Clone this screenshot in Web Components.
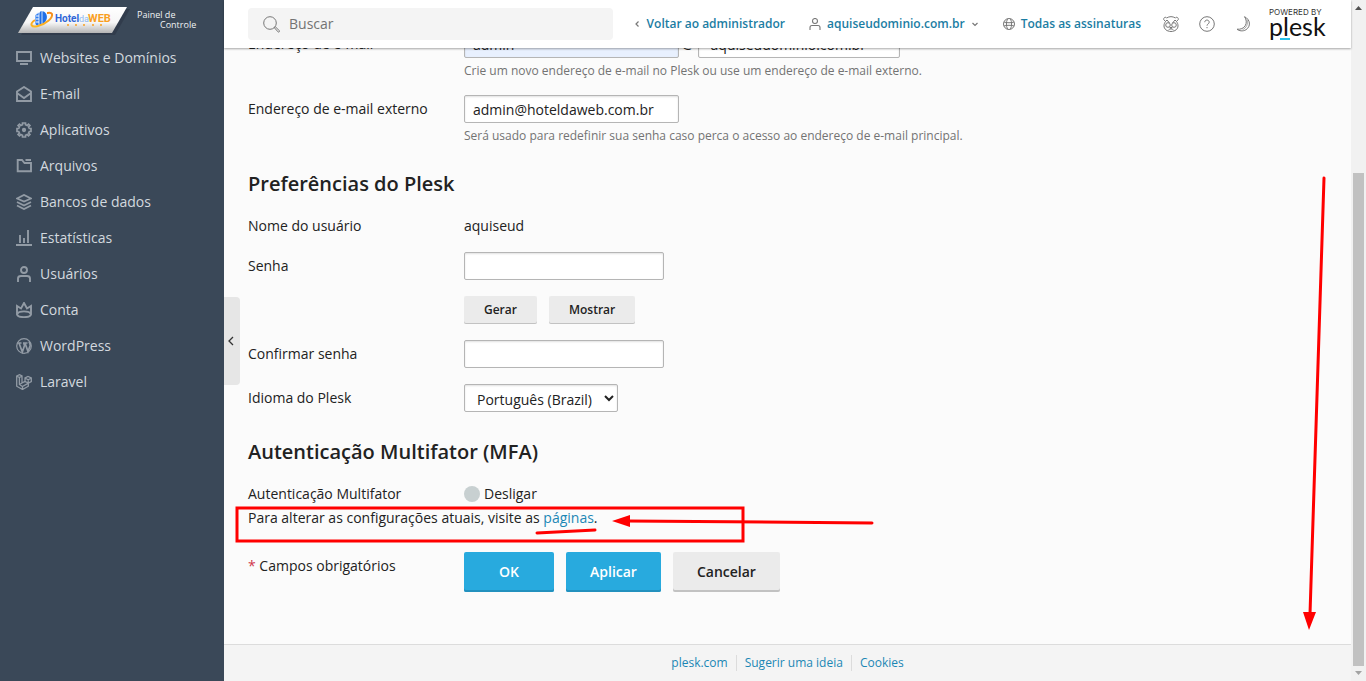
<!DOCTYPE html>
<html lang="pt-BR">
<head>
<meta charset="utf-8">
<meta name="viewport" content="width=device-width, initial-scale=1">
<title>Plesk – Meu perfil</title>
<style>
html, body { margin: 0; height: 100%; }
body { font: 14px/20px "Open Sans", "Noto Sans", sans-serif; color: #222; background: #fbfbfb; overflow: hidden; }
</style>
</head>
<body>
<plesk-app></plesk-app>

<template id="t-app">
<style>
:host { display: grid; grid-template-columns: 224px minmax(0, 1fr) 15px; height: 100vh; overflow: hidden; position: relative; }
.page { display: flex; flex-direction: column; min-width: 0; position: relative; }
main { flex: 1; padding: 0 24px; }
.collapse { position: absolute; left: 0; top: 297px; width: 16px; height: 88px; padding: 0 2px 0 0; border: 0; border-radius: 0 4px 4px 0; background: #e6e6e6; display: grid; place-items: center; }
svg.notes { position: absolute; inset: 0; width: 100%; height: 100%; pointer-events: none; z-index: 5; }
</style>
<side-bar></side-bar>
<div class="page">
  <top-bar></top-bar>
  <main><profile-form></profile-form></main>
  <page-footer></page-footer>
  <button class="collapse" aria-label="Recolher menu"><svg width="8" height="10" fill="none" stroke="#333" stroke-width="1.3"><path d="M6 1 2 5l4 4"/></svg></button>
</div>
<scroll-rail></scroll-rail>
<svg class="notes" fill="none" stroke="#f00" stroke-width="3" stroke-linecap="round" aria-hidden="true">
  <rect x="237" y="508" width="506" height="33"/>
  <path d="M537 533 595 530M872 523 628 521M1324 178 1310 614"/>
  <path d="M612 521 630 515V527ZM1309 630 1303 612H1316Z" fill="#f00" stroke="none"/>
</svg>
</template>

<template id="t-side">
<style>
:host { display: block; background: #3a4858; color: #d3d9df; }
.brand { height: 40px; display: flex; }
.brand a { display: block; }
nav { display: flex; flex-direction: column; }
svg { display: block; }
</style>
<div class="brand"><a href="#" aria-label="Painel de Controle">
<svg width="224" height="40">
  <defs><linearGradient id="g" x2="0" y2="1"><stop stop-color="#fff"/><stop offset=".6" stop-color="#f6f6f6"/><stop offset="1" stop-color="#b5b5b5"/></linearGradient>
  <linearGradient id="o" x2="0" y2="1"><stop stop-color="#f58a1c"/><stop offset="1" stop-color="#fdb924"/></linearGradient></defs>
  <path d="M21 35 37 9H130L115 35Z" fill="#2b3644" opacity=".6"/>
  <path d="M18 33 33 7H127L112 33Z" fill="url(#g)"/>
  <path d="M41 11c8 0 8 12-1 14h-4l1-9 2-3Z" fill="#1f6fe8"/>
  <path d="M35 24V15l4-3v13M42 11v14" fill="#2f7df0" stroke="#fff" stroke-width=".8"/>
  <path d="M36 16h3M36 19h3M36 22h3" stroke="#fff" stroke-width="1"/>
  <path d="M35 20c-6 4-4 8 3 6 8-2 15-8 14-12-1-2-4-1-5-1" fill="none" stroke="url(#o)" stroke-width="2"/>
  <g font-family="Roboto, sans-serif" font-size="10">
    <text x="55" y="22" font-weight="700" fill="#2f66d8">Hotel</text>
    <text x="79" y="22" font-size="9" fill="#8fb8f0">da</text>
    <text x="88" y="22" font-size="11" font-weight="700" fill="#f9a01f">WEB</text>
  </g>
  <path d="M67 25h2M75 25h2M83 25h2M92 25h2M100 25h2" stroke="#f9a01f" stroke-width="1.500"/>
  <g font-family="Open Sans, sans-serif" font-size="9" fill="#f0f2f4"><text x="137" y="18">Painel de</text><text x="160" y="28">Controle</text></g>
</svg></a></div>
<nav>
<nav-item><svg slot="icon" viewBox="0 0 16 16"><path d="M1 2h14v9H1ZM4 14h8"/></svg>Websites e Domínios</nav-item>
<nav-item><svg slot="icon" viewBox="0 0 16 16"><path d="M1 5.500 8 1l7 4.500V15H1ZM1 7l7 5 7-5"/></svg>E-mail</nav-item>
<nav-item><svg slot="icon" viewBox="0 0 16 16"><path d="M6.500 1h3v1.700l1.700.7L12.500 2.200l1.400 1.400-1.300 1.300.7 1.600H15v3h-1.700l-.7 1.600 1.300 1.300-1.400 1.400-1.300-1.200-1.700.7V15h-3v-1.700l-1.700-.7-1.300 1.200-1.400-1.400 1.300-1.300-.7-1.600H1v-3h1.700l.7-1.600-1.300-1.300 1.400-1.400 1.300 1.200 1.700-.7Z" stroke-width="1.700"/><circle cx="8" cy="8" r="1.200" fill="#929ba5"/></svg>Aplicativos</nav-item>
<nav-item><svg slot="icon" viewBox="0 0 16 16"><path d="M1.700 2H6l2.500 3H15v8.300H1.700ZM9.500 2H15"/></svg>Arquivos</nav-item>
<nav-item><svg slot="icon" viewBox="0 0 16 16"><path d="M1 4.500 8 1l7 3.500L8 7.500ZM1 8l7 3.500L15 8M1 11.500 8 15l7-3.500"/></svg>Bancos de dados</nav-item>
<nav-item><svg slot="icon" viewBox="0 0 16 16"><path d="M0 15h16M4 5v8M8 8v5M12 0v13"/></svg>Estatísticas</nav-item>
<nav-item><svg slot="icon" viewBox="0 0 16 16"><circle cx="8" cy="4" r="3"/><path d="M2 16v-3.500C2 10.500 3.500 10 5 10h6c1.500 0 3 .5 3 2.500V16"/></svg>Usuários</nav-item>
<nav-item><svg slot="icon" viewBox="0 0 16 16"><path d="M1 12.500V4l4 2.500L8 1l3 5.500L15 4v8.500c-1 3.500-13 3.500-14 0ZM1.500 12c1-3.500 12-3.500 13 0"/></svg>Conta</nav-item>
<nav-item><svg slot="icon" viewBox="0 0 16 16"><circle cx="8" cy="8" r="7.300" stroke-width="1.200"/><path d="M1.500 5h4M3 5l3.300 9L8.500 7.500 7.700 5H7m1-0h3.500M9 5l3 8.500L14 8c.5-2-.5-3-1-4.500" stroke-width="1.700"/></svg>WordPress</nav-item>
<nav-item><svg slot="icon" viewBox="0 0 16 16"><path d="M.7 2 3.500.7 6 2v7l3-1.700V4L12 2.500 15.300 4v3.500l-3 1.700v3L6.500 15.500.7 12.200ZM.7 2 3.400 3.500 6 2M3.400 3.500V10.500l3 2 6-3.400M9 4l3.200 1.700L15.300 4M12.200 5.700v3.500L9 7.300M6.500 12.500v3M3.400 10.500 6 9" stroke-width="1.300"/></svg>Laravel</nav-item>
</nav>
</template>

<template id="t-item">
<style>
:host { display: block; }
a { display: flex; align-items: center; gap: 8px; height: 36px; padding-left: 16px; color: inherit; text-decoration: none; }
::slotted(svg) { width: 16px; height: 16px; fill: none; stroke: #929ba5; stroke-width: 1.9; }
</style>
<a href="#"><slot name="icon"></slot><slot></slot></a>
</template>

<template id="t-top">
<style>
:host { display: flex; align-items: center; height: 48px; padding: 0 22px 0 24px; background: #fff; box-shadow: 0 1px 2px rgba(0,0,0,.35); position: relative; z-index: 2; font-size: 12px; }
.search { display: flex; align-items: center; flex: 0 1 365px; height: 32px; background: #f4f4f4; border-radius: 4px; box-sizing: border-box; padding-left: 15px; gap: 9px; }
.search input { border: 0; background: none; font: inherit; font-size: 14px; flex: 1; min-width: 0; outline: 0; padding: 0; }
.search input::placeholder { color: #737373; opacity: 1; }
.links { margin-left: auto; display: flex; align-items: center; gap: 24px; white-space: nowrap; }
.links a { display: flex; align-items: center; gap: 6px; color: #1b7da3; font-weight: 600; text-decoration: none; }
.tools { display: flex; gap: 20px; margin: 0 18px 0 22px; }
button { border: 0; background: none; padding: 0; width: 16px; height: 16px; }
svg { fill: none; stroke: #777; display: block; }
.plesk { display: flex; flex-direction: column; width: 60px; padding-bottom: 4px; color: #111; text-decoration: none; font-family: Lato, sans-serif; position: relative; }
.plesk small { font: 8px/8px Inter, sans-serif; white-space: nowrap; color: #333; }
.plesk b { font-weight: 400; font-size: 25px; line-height: 20px; }
.plesk i { position: absolute; left: 11px; bottom: 0; width: 10px; height: 2px; background: #28c0e8; }
</style>
<label class="search"><svg width="17" height="17" viewBox="0 0 17 17"><circle cx="7" cy="7" r="6.300"/><path d="m11.300 11.700 1-1 4 4c.7.700-.5 2-1.200 1.200Z"/></svg><input type="search" placeholder="Buscar" aria-label="Buscar"></label>
<div class="links">
<a href="#"><svg width="7" height="8" stroke-width="1.200"><path d="M4.500 1.500 2 4l2.500 2.500"/></svg>Voltar ao administrador</a>
<a href="#"><svg width="12" height="12" viewBox="0 0 12 12" stroke-width="1.100"><circle cx="6" cy="3" r="2.500"/><path d="M1 12V9.500C1 8 2 7.500 3 7.500h6c1 0 2 .5 2 2V12"/></svg>aquiseudominio.com.br<svg width="8" height="8" stroke-width="1.200"><path d="M1.500 3 4 5.500 6.500 3"/></svg></a>
<a href="#"><svg width="12" height="12" viewBox="0 0 12 12"><circle cx="6" cy="6" r="5.500"/><path d="M4.500 1C3 4 3 8 4.500 11M7.500 1C9 4 9 8 7.500 11M1 4c3 1 7 1 10 0M1 8c3-1 7-1 10 0"/></svg>Todas as assinaturas</a>
</div>
<div class="tools">
<button aria-label="Novidades"><svg width="16" height="16" viewBox="0 0 16 16"><path d="M3.500 2C2.500.5.500 1.500.7 3.500L2.500 5.500C1.500 7 1 8 1 10c0 3 3 5.500 7 5.500s7-2.500 7-5.500c0-2-.5-3-1.500-4.500l1.800-2C15.500 1.500 13.500.5 12.500 2M3.500 2c3-1.800 6-1.800 9 0M2.500 5.500 4 4l2.500 3M13.500 5.500 12 4 9.500 7"/><circle cx="5" cy="9" r="2.300"/><circle cx="11" cy="9" r="2.300"/><path d="M6.800 11.500h2.400L8 12.500ZM5.500 14c1.500-1.500 3.500-1.500 5 0"/></svg></button>
<button aria-label="Ajuda"><svg width="16" height="16" viewBox="0 0 16 16"><circle cx="8" cy="8" r="7.300"/><path d="M5.800 6.200c0-3 4.400-2.700 4.400 0C10.200 8 8 7.800 8 9.700M8 11v1.200"/></svg></button>
<button aria-label="Modo escuro"><svg width="16" height="16" viewBox="0 0 16 16"><path d="M9.500.7c6 2.800 6.500 9.800 1.500 13C8 15.600 4 15 2 13.200c3.500.4 6.700-.8 8.300-3.600C11.900 6.800 11.500 3.500 9.500.7Z"/><path d="M12 3.500c1.500 4-.5 8.500-4.500 10.300" stroke-width=".6"/></svg></button>
</div>
<a class="plesk" href="#"><small>POWERED BY</small><b>plesk</b><i></i></a>
</template>

<template id="t-row">
<style>
:host { display: grid; grid-template-columns: 216px minmax(0, 1fr); margin-bottom: 16px; }
.label { padding-top: 4px; }
:host([plain]) .label { padding-top: 0; }
</style>
<div class="label"><slot name="label"></slot></div><div><slot></slot></div>
</template>

<template id="t-form">
<style>
:host { display: block; margin-top: -18px; }
h2 { font-size: 20px; line-height: 28px; font-weight: 600; margin: 26px 0 18px; }
input[type=text], input[type=email], input[type=password], select { display: block; box-sizing: border-box; width: 200px; height: 28px; border: 1px solid #b5b5b5; border-radius: 2px; background: #fff; box-shadow: inset 0 1px 2px rgba(0,0,0,.12); font: inherit; color: #222; padding: 0 8px; margin: 0; outline: 0; }
input.wide { width: 215px; }
input.auto { background: #e8f0fe; }
select { width: 154px; padding: 2px 0 0 8px; }
select.domain { width: 202px; appearance: none; padding-left: 12px; }
.line { display: flex; gap: 12px; }
.mail { display: flex; align-items: center; gap: 3px; }
.hint { font-size: 12px; line-height: 16px; color: #737373; margin: 5px 0 0; }
button { font: inherit; font-weight: 600; color: #222; background: #ebebeb; border: 0; border-radius: 2px; box-shadow: inset 0 -1px #c2c2c2; }
.small { font-size: 12px; height: 28px; padding: 0 20px; }
.big { height: 40px; padding: 0 24px; min-width: 90px; box-shadow: inset 0 -2px #c2c2c2; }
.blue { background: #28aade; color: #fff; box-shadow: inset 0 -2px #2391be; }
.state { display: flex; align-items: center; gap: 4px; }
.dot { width: 16px; height: 16px; border-radius: 50%; background: #c8d0d1; }
p { margin: 0; }
a { color: #1b87b5; text-decoration: none; }
.mfa { margin-bottom: 4px; }
.note { margin-bottom: 24px; }
.req { color: #d0384c; }
form-row { color: #222; }
</style>
<form onsubmit="return false">
<form-row><label slot="label" for="mail">Endereço de e-mail</label>
  <div class="mail"><input class="wide auto" id="mail" type="text" value="admin"><span>@</span><select class="domain" aria-label="Domínio"><option>aquiseudominio.com.br</option></select></div>
  <p class="hint">Crie um novo endereço de e-mail no Plesk ou use um endereço de e-mail externo.</p></form-row>
<form-row><label slot="label" for="ext">Endereço de e-mail externo</label>
  <input class="wide" id="ext" type="email" value="admin@hoteldaweb.com.br">
  <p class="hint">Será usado para redefinir sua senha caso perca o acesso ao endereço de e-mail principal.</p></form-row>
<h2>Preferências do Plesk</h2>
<form-row plain><span slot="label">Nome do usuário</span><span>aquiseud</span></form-row>
<form-row><label slot="label" for="pw">Senha</label><input id="pw" type="password"></form-row>
<form-row><div class="line"><button type="button" class="small">Gerar</button><button type="button" class="small">Mostrar</button></div></form-row>
<form-row><label slot="label" for="pw2">Confirmar senha</label><input id="pw2" type="password"></form-row>
<form-row><label slot="label" for="lang">Idioma do Plesk</label><select id="lang"><option>Português (Brazil)</option></select></form-row>
<h2>Autenticação Multifator (MFA)</h2>
<form-row plain class="mfa"><span slot="label">Autenticação Multifator</span><div class="state"><span class="dot"></span>Desligar</div></form-row>
<p class="note">Para alterar as configurações atuais, visite as <a href="#">páginas</a>.</p>
<form-row><span slot="label"><span class="req">*</span> Campos obrigatórios</span><div class="line"><button class="big blue">OK</button><button type="button" class="big blue">Aplicar</button><button type="button" class="big">Cancelar</button></div></form-row>
</form>
</template>

<template id="t-footer">
<style>
:host { display: flex; justify-content: center; align-items: center; height: 36px; border-top: 1px solid #dcdcdc; background: #f4f4f4; font-size: 12px; line-height: 16px; }
a { color: #1b87b5; text-decoration: none; padding: 0 8px; }
a + a { border-left: 1px solid #dcdcdc; }
</style>
<a href="#">plesk.com</a><a href="#">Sugerir uma ideia</a><a href="#">Cookies</a>
</template>

<template id="t-rail">
<style>
:host { display: flex; flex-direction: column; align-items: center; background: #f1f1f1; }
svg { display: block; flex: none; }
.gap { flex: 158; }
.thumb { flex: 493; width: 11px; background: #c1c1c1; }
</style>
<svg width="15" height="15"><path d="M4 10 7.500 6 11 10Z" fill="#505050"/></svg>
<div class="gap"></div><div class="thumb"></div>
<svg width="15" height="15"><path d="M4 5 7.500 9 11 5Z" fill="#a3a3a3"/></svg>
</template>

<script>
const define = (name, id) => customElements.define(name, class extends HTMLElement {
  constructor() {
    super();
    this.attachShadow({ mode: "open" }).append(document.getElementById(id).content.cloneNode(true));
  }
});
define("nav-item", "t-item");
define("form-row", "t-row");
define("side-bar", "t-side");
define("top-bar", "t-top");
define("profile-form", "t-form");
define("page-footer", "t-footer");
define("scroll-rail", "t-rail");
define("plesk-app", "t-app");
</script>
</body>
</html>
